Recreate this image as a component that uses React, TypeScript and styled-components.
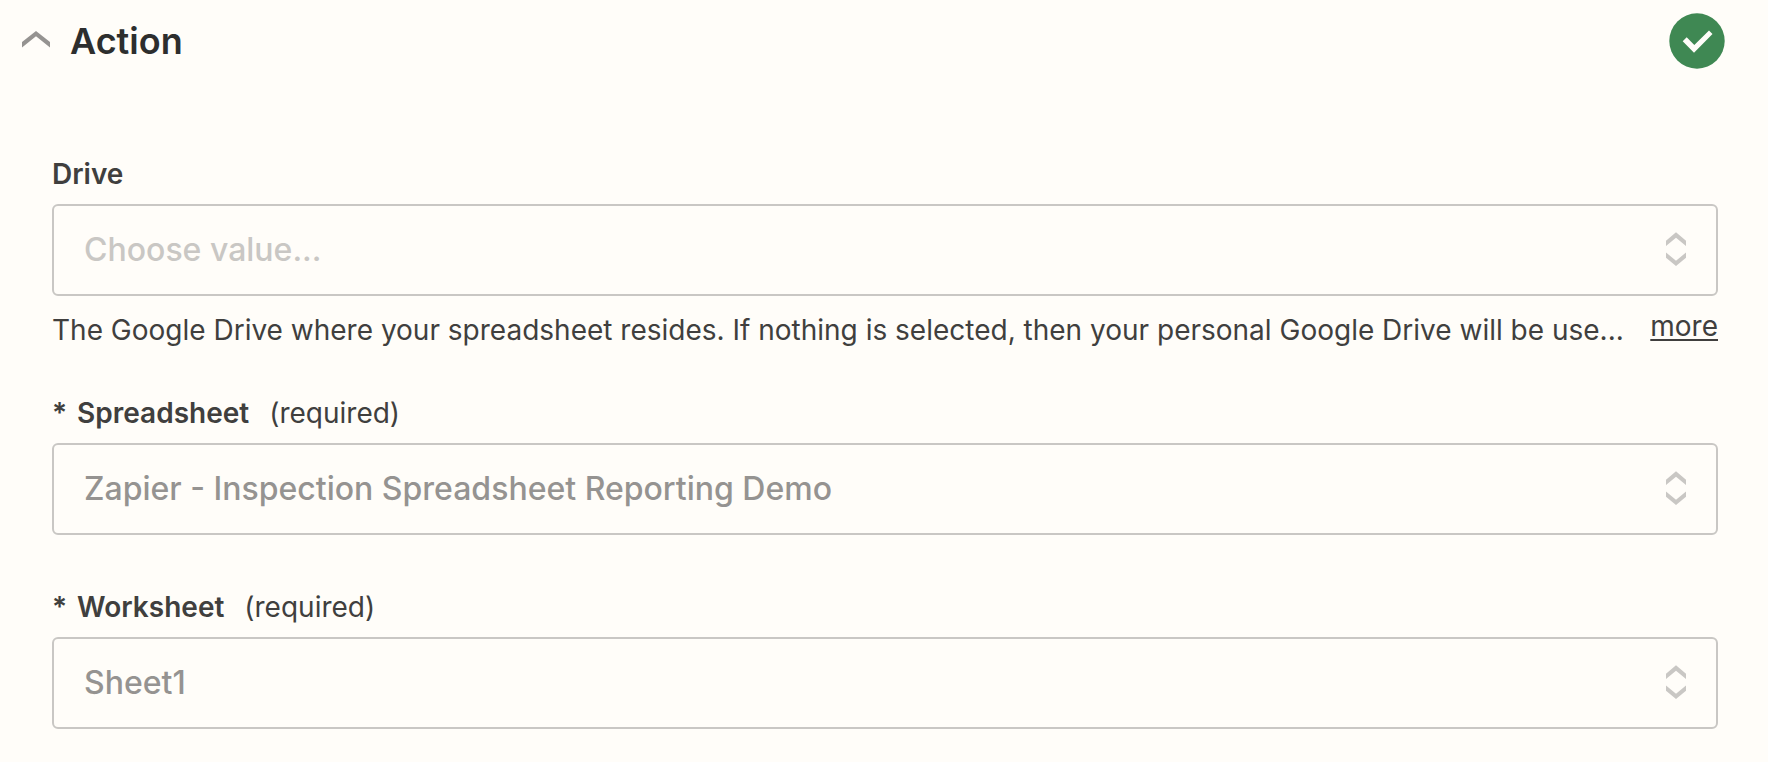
import React, { useId, useState } from "react";
import styled, { createGlobalStyle } from "styled-components";

const GlobalStyle = createGlobalStyle`
  *, *::before, *::after { box-sizing: border-box; }
  html, body { margin: 0; background: #fffdf9; }
  body {
    color: #403f3e;
    font-family: Inter, "Liberation Sans", sans-serif;
    font-size: 28px;
    line-height: 40px;
  }
`;

const Section = styled.section`
  padding-bottom: 32px;
`;

const Header = styled.header`
  display: flex;
  align-items: center;
  justify-content: space-between;
  padding: 13px 43px 0 22px;
`;

const Title = styled.h2`
  margin: 0;
  font-size: 36px;
  font-weight: 600;
  line-height: 56px;
`;

const Toggle = styled.button`
  display: flex;
  align-items: center;
  gap: 20px;
  padding: 0;
  border: 0;
  background: none;
  color: #2d2e2e;
  font: inherit;
  cursor: pointer;
`;

const ToggleIcon = styled.svg<{ $open: boolean }>`
  display: block;
  width: 28px;
  height: 20px;
  fill: #959391;
  transform: ${(p) => (p.$open ? "none" : "rotate(180deg)")};
`;

const StatusBadge = styled.svg`
  display: block;
  width: 56px;
  height: 56px;
`;

const Form = styled.form`
  display: flex;
  flex-direction: column;
  gap: 52px;
  padding: 85px 50px 0 52px;
`;

const FieldRow = styled.div<{ $tight?: boolean }>`
  margin-bottom: ${(p) => (p.$tight ? "-9px" : "0")};
`;

const Label = styled.label`
  display: flex;
  margin-bottom: 10px;
  font-weight: 600;
`;

const Star = styled.span`
  margin-right: 10px;
`;

const Required = styled.span`
  margin-left: 20px;
  font-weight: 400;
`;

const Control = styled.div`
  position: relative;
`;

const Select = styled.select<{ $empty: boolean }>`
  display: block;
  width: 100%;
  height: 92px;
  padding: 0 80px 2px 30px;
  border: 2px solid #c9c7c4;
  border-radius: 6px;
  appearance: none;
  background: transparent;
  color: ${(p) => (p.$empty ? "#c9c7c4" : "#959391")};
  font-family: inherit;
  font-size: 32px;
  font-weight: 500;
  opacity: 1;
`;

const SelectIcon = styled.svg`
  position: absolute;
  top: 28px;
  right: 32px;
  width: 20px;
  height: 34px;
  fill: #c9c7c4;
  pointer-events: none;
`;

const Help = styled.div`
  display: flex;
  align-items: flex-start;
  justify-content: space-between;
  gap: 20px;
  padding-top: 10px;
`;

const HelpText = styled.p`
  flex: 1;
  min-width: 0;
  margin: 0;
  padding-top: 4px;
  overflow: hidden;
  text-overflow: ellipsis;
  white-space: nowrap;
`;

const More = styled.a`
  color: inherit;
  text-decoration: underline;
  text-decoration-thickness: 2px;
  text-underline-offset: 3px;
`;

interface FieldProps {
  label: string;
  value: string;
  required?: boolean;
  empty?: boolean;
  help?: string;
}

function Field({ label, value, required, empty = false, help }: FieldProps) {
  const id = useId();
  return (
    <FieldRow $tight={Boolean(help)}>
      <Label htmlFor={id}>
        {required && <Star>*</Star>}
        {label}
        {required && <Required>(required)</Required>}
      </Label>
      <Control>
        <Select id={id} $empty={empty} disabled defaultValue={value}>
          <option value={value}>{value}</option>
        </Select>
        <SelectIcon viewBox="0 0 20 34" aria-hidden="true">
          <path d="M10 0.3 20 8.8V14L10 5.8 0 14V8.8Z" />
          <path d="M10 34 20 25.7V20.5L10 28.7 0 20.5V25.7Z" />
        </SelectIcon>
      </Control>
      {help && (
        <Help>
          <HelpText>{help}</HelpText>
          <More href="#more">more</More>
        </Help>
      )}
    </FieldRow>
  );
}

export default function App() {
  const [open, setOpen] = useState(true);
  return (
    <>
      <GlobalStyle />
      <Section>
        <Header>
          <Title>
            <Toggle type="button" aria-expanded={open} onClick={() => setOpen(!open)}>
              <ToggleIcon $open={open} viewBox="0 0 28 20" aria-hidden="true">
                <path d="M14 0 28 11V16.5L14 5.2 0 16.5V11Z" />
              </ToggleIcon>
              Action
            </Toggle>
          </Title>
          <StatusBadge viewBox="0 0 56 56" role="img" aria-label="Complete">
            <circle cx="28" cy="28" r="27.7" fill="#3f8853" />
            <path d="M13.7 28.3 17.7 24.3 25.3 32 40 17.6 43.5 21 25 39.8Z" fill="#fffdf9" />
          </StatusBadge>
        </Header>
        {open && (
          <Form>
            <Field
              label="Drive"
              value="Choose value..."
              empty
              help="The Google Drive where your spreadsheet resides. If nothing is selected, then your personal Google Drive will be use..."
            />
            <Field label="Spreadsheet" value="Zapier - Inspection Spreadsheet Reporting Demo" required />
            <Field label="Worksheet" value="Sheet1" required />
          </Form>
        )}
      </Section>
    </>
  );
}
